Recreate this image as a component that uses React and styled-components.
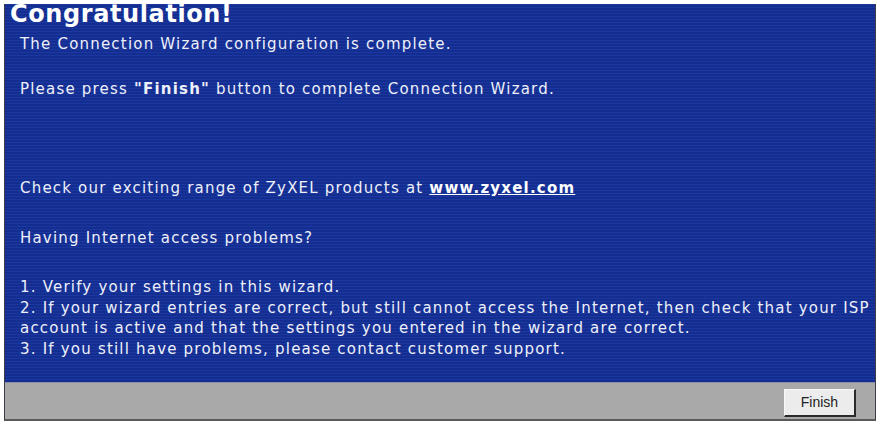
import React from 'react';
import styled, { createGlobalStyle } from 'styled-components';

const GlobalStyle = createGlobalStyle`
  html, body {
    margin: 0;
    padding: 0;
    background: #ffffff;
    width: 879px;
    height: 421px;
    overflow: hidden;
  }
`;

const Frame = styled.div`
  width: 879px;
  height: 421px;
  box-sizing: border-box;
  padding: 4px 3px 0 4px;
  display: flex;
  flex-direction: column;
  background: #ffffff;
`;

const Panel = styled.div`
  flex: 1;
  display: flex;
  flex-direction: column;
  border: 1px solid #3c3c46;
  border-top: none;
  border-bottom: 2px solid #5a5a5a;
`;

const Body = styled.div`
  flex: 1;
  background-color: #14309a;
  background-image: repeating-linear-gradient(
    to bottom,
    rgba(255, 255, 255, 0.035) 0px,
    rgba(255, 255, 255, 0.035) 1px,
    rgba(0, 0, 0, 0.06) 1px,
    rgba(0, 0, 0, 0.06) 3px
  );
  color: #eef0fa;
  font-family: "DejaVu Sans", Verdana, sans-serif;
  font-size: 15px;
  letter-spacing: 1.2px;
  line-height: 20.5px;
  white-space: nowrap;
  padding: 0 0 0 15px;
`;

const Title = styled.h1`
  margin: -2px 0 0 -10px;
  font-family: "DejaVu Sans", Verdana, sans-serif;
  font-size: 24px;
  line-height: 24px;
  letter-spacing: 0.6px;
  font-weight: bold;
  color: #ffffff;
`;

const Para = styled.p`
  margin: 0;
  margin-top: ${p => p.$gap || 0}px;
`;

const Site = styled.a`
  color: #ffffff;
  font-weight: bold;
  text-decoration: underline;
`;

const Footer = styled.div`
  height: 36px;
  background: #a9a9a9;
  border-top: 1px solid #8a8ea8;
  display: flex;
  align-items: center;
  justify-content: flex-end;
  padding-right: 19px;
`;

const Button = styled.button`
  width: 72px;
  height: 28px;
  margin-top: 3px;
  background: #ececec;
  border: 1px solid #f8f8f8;
  border-right: 2px solid #2a2a2a;
  border-bottom: 2px solid #2a2a2a;
  font-family: "Liberation Sans", Arial, sans-serif;
  font-size: 14px;
  color: #222;
  padding: 0;
`;

export default function App() {
  return (
    <>
      <GlobalStyle />
      <Frame>
        <Panel>
          <Body>
            <Title>Congratulation!</Title>
            <Para $gap={8}>The Connection Wizard configuration is complete.</Para>
            <Para $gap={24}>Please press <b>"Finish"</b> button to complete Connection Wizard.</Para>
            <Para $gap={79}>
              Check our exciting range of ZyXEL products at <Site href="#">www.zyxel.com</Site>
            </Para>
            <Para $gap={29}>Having Internet access problems?</Para>
            <Para $gap={29}>
              1. Verify your settings in this wizard.<br />
              2. If your wizard entries are correct, but still cannot access the Internet, then check that your ISP<br />
              account is active and that the settings you entered in the wizard are correct.<br />
              3. If you still have problems, please contact customer support.
            </Para>
          </Body>
          <Footer>
            <Button>Finish</Button>
          </Footer>
        </Panel>
      </Frame>
    </>
  );
}
